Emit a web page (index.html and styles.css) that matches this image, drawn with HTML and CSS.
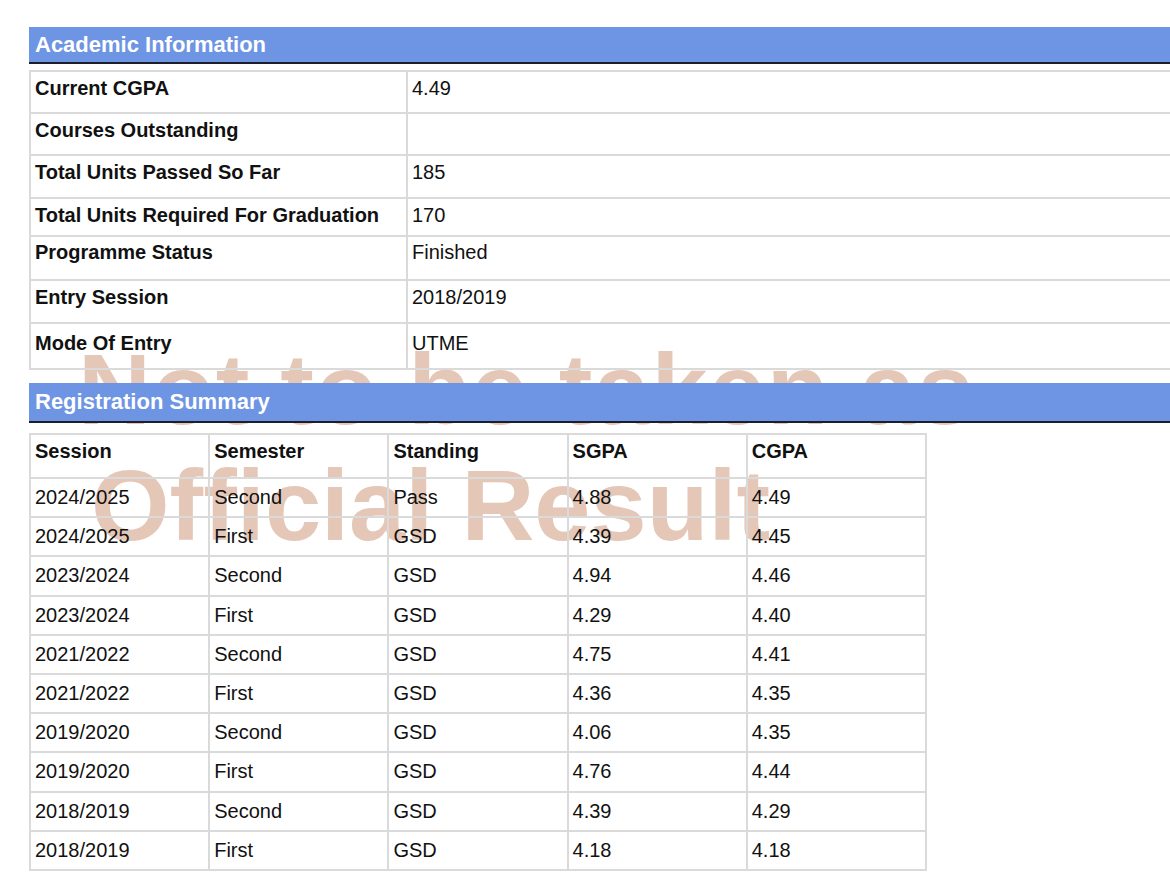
FILE: index.html
```html
<!DOCTYPE html>
<html lang="en">
<head>
<meta charset="utf-8">
<title>Academic Information</title>
<link rel="stylesheet" href="styles.css">
</head>
<body>
<div class="page">
  <div class="watermark" aria-hidden="true">
    <span class="wm-line wm-line-1">Not to be taken as</span>
    <span class="wm-line wm-line-2">Official Result</span>
  </div>

  <section class="section section-academic">
    <h2 class="section-title">Academic Information</h2>
    <table class="info-table">
      <tbody>
        <tr><th>Current CGPA</th><td>4.49</td></tr>
        <tr><th>Courses Outstanding</th><td></td></tr>
        <tr class="row-43"><th>Total Units Passed So Far</th><td>185</td></tr>
        <tr class="row-38"><th>Total Units Required For Graduation</th><td>170</td></tr>
        <tr class="row-44"><th>Programme Status</th><td>Finished</td></tr>
        <tr class="row-43"><th>Entry Session</th><td>2018/2019</td></tr>
        <tr class="row-46"><th>Mode Of Entry</th><td>UTME</td></tr>
      </tbody>
    </table>
  </section>

  <section class="section section-registration">
    <h2 class="section-title section-title-tall">Registration Summary</h2>
    <table class="reg-table">
      <thead>
        <tr><th>Session</th><th>Semester</th><th>Standing</th><th>SGPA</th><th>CGPA</th></tr>
      </thead>
      <tbody>
        <tr><td>2024/2025</td><td>Second</td><td>Pass</td><td>4.88</td><td>4.49</td></tr>
        <tr><td>2024/2025</td><td>First</td><td>GSD</td><td>4.39</td><td>4.45</td></tr>
        <tr><td>2023/2024</td><td>Second</td><td>GSD</td><td>4.94</td><td>4.46</td></tr>
        <tr><td>2023/2024</td><td>First</td><td>GSD</td><td>4.29</td><td>4.40</td></tr>
        <tr><td>2021/2022</td><td>Second</td><td>GSD</td><td>4.75</td><td>4.41</td></tr>
        <tr><td>2021/2022</td><td>First</td><td>GSD</td><td>4.36</td><td>4.35</td></tr>
        <tr><td>2019/2020</td><td>Second</td><td>GSD</td><td>4.06</td><td>4.35</td></tr>
        <tr><td>2019/2020</td><td>First</td><td>GSD</td><td>4.76</td><td>4.44</td></tr>
        <tr><td>2018/2019</td><td>Second</td><td>GSD</td><td>4.39</td><td>4.29</td></tr>
        <tr><td>2018/2019</td><td>First</td><td>GSD</td><td>4.18</td><td>4.18</td></tr>
      </tbody>
    </table>
  </section>
</div>
</body>
</html>
```

FILE: styles.css
```css
html, body {
  margin: 0;
  padding: 0;
  background: #ffffff;
  overflow: hidden;
}

body {
  font-family: "Liberation Sans", Arial, Helvetica, sans-serif;
  color: #111111;
  font-size: 20px;
  line-height: 22px;
}

.page {
  position: relative;
  width: 1200px;
  padding: 27px 0 0 29px;
}

/* Watermark sits behind the transparent tables but under the blue bars */
.watermark {
  position: absolute;
  left: 78px;
  top: 331px;
  z-index: 0;
  font-family: "Liberation Sans", Arial, sans-serif;
  font-weight: bold;
  font-size: 101px;
  line-height: 116px;
  color: #e5c7b7;
  white-space: nowrap;
  pointer-events: none;
}

.wm-line {
  display: block;
}

.wm-line-1 {
  letter-spacing: 1.5px;
}

.wm-line-2 {
  padding-left: 13px;
}

.section {
  position: relative;
  z-index: 1;
}

.section-registration {
  margin-top: 13px;
}

.section-title {
  margin: 0;
  height: 35px;
  box-sizing: content-box;
  background: #6e94e4;
  border-bottom: 2px solid #1c1f2b;
  color: #ffffff;
  font-size: 22px;
  font-weight: bold;
  line-height: 35px;
  padding-left: 6px;
  position: relative;
  z-index: 2;
}

.section-title-tall {
  height: 38px;
  line-height: 37px;
}

table {
  border-collapse: collapse;
  background: transparent;
  table-layout: fixed;
}

.info-table {
  margin-top: 6px;
  width: 1160px;
}

.info-table th,
.info-table td {
  border: 2px solid #dadada;
  height: 42px;
  box-sizing: border-box;
  padding: 5px 4px 0 4px;
  vertical-align: top;
  text-align: left;
}

.info-table th {
  width: 377px;
  font-weight: bold;
}

.info-table td {
  font-weight: normal;
}

.info-table tr.row-43 th,
.info-table tr.row-43 td {
  height: 43px;
}

.info-table tr.row-38 th,
.info-table tr.row-38 td {
  height: 38px;
  padding-top: 5px;
}

.info-table tr.row-44 th,
.info-table tr.row-44 td {
  height: 44px;
  padding-top: 4px;
}

.info-table tr.row-46 th,
.info-table tr.row-46 td {
  height: 46px;
  padding-top: 8px;
}

.reg-table {
  margin-top: 10px;
  width: 898px;
}

.reg-table th,
.reg-table td {
  border: 2px solid #dadada;
  box-sizing: border-box;
  text-align: left;
  vertical-align: top;
  padding-left: 4px;
}

.reg-table th {
  height: 44px;
  padding-top: 5px;
  font-weight: bold;
}

.reg-table td {
  height: 39.2px;
  padding-top: 7px;
  font-weight: normal;
}
```
